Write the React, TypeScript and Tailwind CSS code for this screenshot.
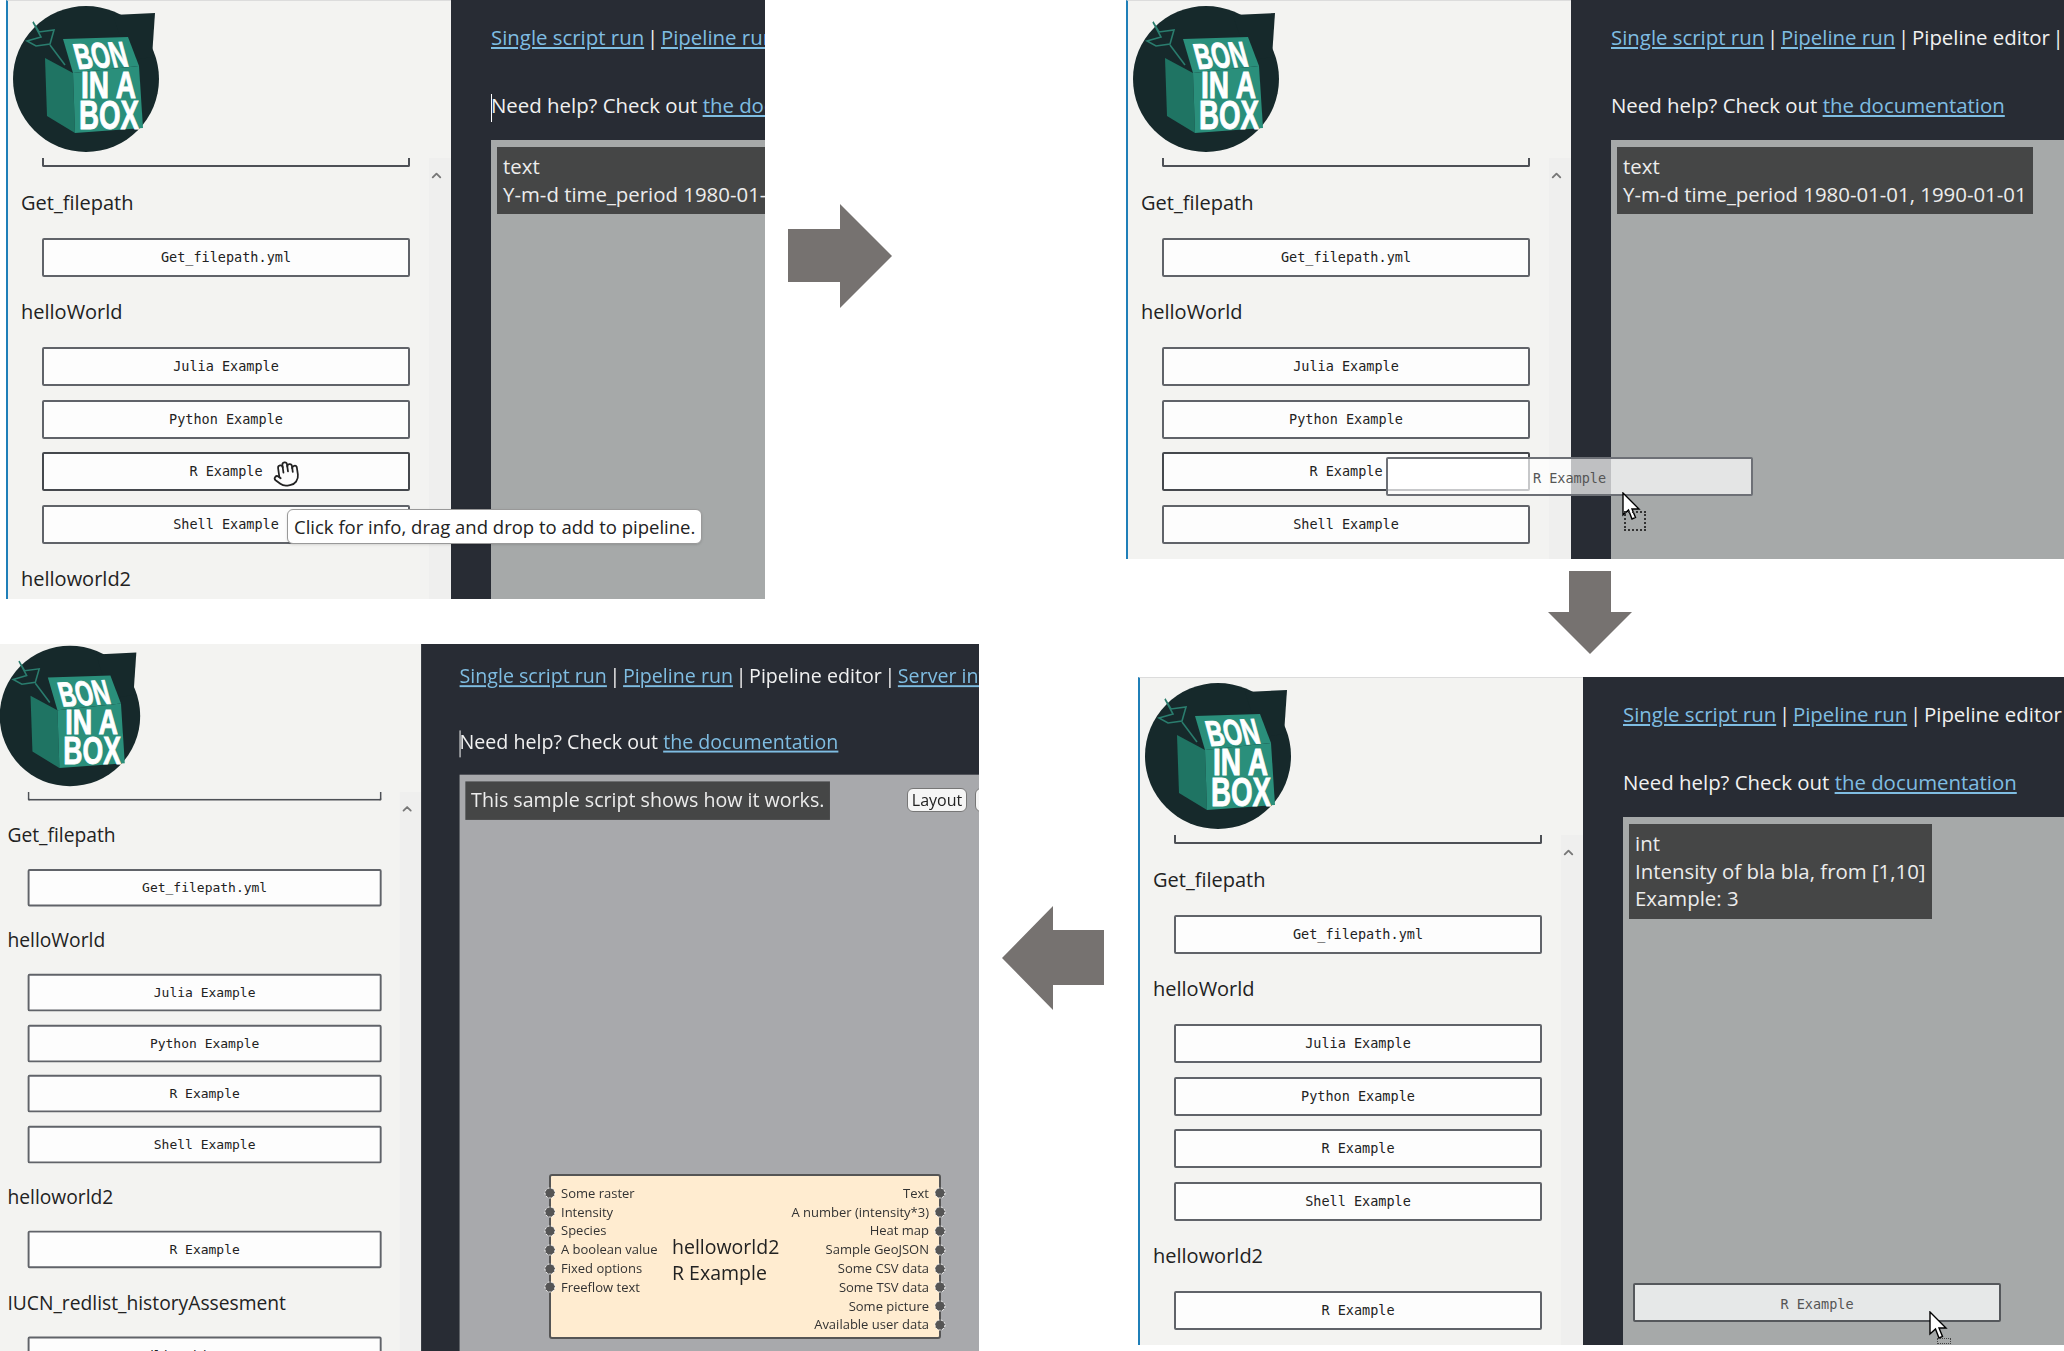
import React from 'react';
import { ChevronUp, Hand } from 'lucide-react';

type Section = { title: string; items: string[] };

const sections: Section[] = [
  { title: 'Get_filepath', items: ['Get_filepath.yml'] },
  { title: 'helloWorld', items: ['Julia Example', 'Python Example', 'R Example', 'Shell Example'] },
  { title: 'helloworld2', items: ['R Example'] },
  { title: 'IUCN_redlist_historyAssesment', items: ['IUCN_redlist_historyAssesment'] },
];

// Logo: the letters stay real text, squeezed with textLength
const Logo: React.FC = () => (
  <svg viewBox="0 0 160 160" className="w-40 h-40 shrink-0">
    <circle cx="78" cy="78" r="73" fill="#16292b" />
    <path d="M105 14 L147 12 L144 56 L120 60 Z" fill="#16292b" />
    <path d="M25 21 L31 31 L46 29 L42 43 L28 45 L19 40 L33 36 Z" fill="none" stroke="#2a7d6e" strokeWidth="1.6" />
    <path d="M42 44 L57 64" stroke="#2a7d6e" strokeWidth="1.6" />
    <path d="M37 57 L65 72 L67 132 L39 115 Z" fill="#1f7463" />
    <path d="M55 38 L120 36 L131 65 L65 72 Z" fill="#2a8f7b" />
    <path d="M65 72 L131 65 L135 127 L67 132 Z" fill="#2a8f7b" />
    <g fontFamily="'Liberation Sans', sans-serif" fontWeight="700" fill="#ffffff" stroke="#ffffff" strokeWidth="0.9">
      <text x="0" y="0" fontSize="36" textLength="52" lengthAdjust="spacingAndGlyphs" transform="translate(70 68) rotate(-3) skewX(12)">BON</text>
      <text x="73" y="97" fontSize="36" textLength="55" lengthAdjust="spacingAndGlyphs">IN A</text>
      <text x="71" y="128" fontSize="40" textLength="60" lengthAdjust="spacingAndGlyphs">BOX</text>
    </g>
  </svg>
);

const ScriptButton: React.FC<{ label: string; active?: boolean }> = ({ label, active }) => (
  <div
    className={`h-[39px] w-[368px] flex items-center justify-center bg-[#fdfdfd] border-2 rounded-[2px] font-['DejaVu_Sans_Mono',monospace] text-[13.5px] text-[#222] whitespace-nowrap ${
      active ? 'border-[#45484d]' : 'border-[#606369]'
    }`}
  >
    {label}
  </div>
);

const Sidebar: React.FC<{ activeR?: boolean }> = ({ activeR }) => (
  <aside className="w-[445px] shrink-0 flex flex-col bg-[#f3f3f1] border-l-2 border-[#1f7fb8] border-t border-t-[#dcdcdc]">
    <div className="h-[157px] shrink-0">
      <Logo />
    </div>
    <div className="flex flex-1 min-h-0">
      <div className="flex-1 overflow-hidden pl-[13px] flex flex-col gap-[21.5px] text-[#222] text-[20px]">
        <div className="ml-[21px] w-[368px] h-[9px] shrink-0 border-2 border-t-0 border-[#4d5056] rounded-b-[2px]" />
        {sections.map(section => (
          <div key={section.title} className="shrink-0">
            <div className="h-7 leading-7 mb-[21px] whitespace-nowrap">{section.title}</div>
            <div className="ml-[21px] flex flex-col gap-[13.5px]">
              {section.items.map((item, i) => (
                <ScriptButton
                  key={item}
                  label={item}
                  active={activeR && section.title === 'helloWorld' && i === 2}
                />
              ))}
            </div>
          </div>
        ))}
      </div>
      <div className="w-[22px] shrink-0 bg-[#efefee] flex justify-center pt-[8px] pr-[7px]">
        <ChevronUp size={19} strokeWidth={3} className="text-[#777]" />
      </div>
    </div>
  </aside>
);

const Sep: React.FC = () => <span className="-mx-[2.5px]"> | </span>;

const Panel: React.FC<{
  className: string;
  contentClass?: string;
  canvasClass?: string;
  caret?: boolean;
  activeR?: boolean;
  canvas: React.ReactNode;
  children?: React.ReactNode;
}> = ({ className, contentClass = 'h-full', canvasClass = 'bg-[#a6a9a9]', caret, activeR, canvas, children }) => (
  <div className={`absolute overflow-hidden ${className}`}>
    <div className={`flex ${contentClass}`}>
      <Sidebar activeR={activeR} />
      <main className="flex-1 min-w-0 bg-[#282c34] pl-10 flex flex-col text-[20.4px] text-[#f1f1f1]">
        <nav className="mt-[25px] h-6 leading-6 whitespace-nowrap">
          <a className="text-[#7fbde2] underline">Single script run</a>
          <Sep />
          <a className="text-[#7fbde2] underline">Pipeline run</a>
          <Sep />
          Pipeline editor
          <Sep />
          <a className="text-[#7fbde2] underline">Server info</a>
        </nav>
        <p className="mt-11 h-6 leading-6 whitespace-nowrap">
          {caret && <span className="inline-block w-px h-7 bg-white align-middle -mr-px" />}
          Need help? Check out <a className="text-[#7fbde2] underline">the documentation</a>
        </p>
        <div className={`mt-[23px] flex-1 relative ${canvasClass}`}>{canvas}</div>
      </main>
    </div>
    {children}
  </div>
);

const InfoBox: React.FC<{ lines: string[] }> = ({ lines }) => (
  <div className="absolute left-[6px] top-[7px] w-fit bg-[#454646] px-[6px] py-[6px] leading-[27.5px] text-[#ececec] whitespace-nowrap">
    {lines.map(line => (
      <div key={line}>{line}</div>
    ))}
  </div>
);

const Cursor: React.FC<{ className: string }> = ({ className }) => (
  <svg viewBox="0 0 20 30" className={`absolute w-5 h-[30px] ${className}`}>
    <path d="M1 1 L1 23 L6.5 18 L10 27 L13.5 25.5 L10 17 L17 17 Z" fill="#ffffff" stroke="#000000" strokeWidth="1.4" />
  </svg>
);

const ports = {
  left: ['Some raster', 'Intensity', 'Species', 'A boolean value', 'Fixed options', 'Freeflow text'],
  right: ['Text', 'A number (intensity*3)', 'Heat map', 'Sample GeoJSON', 'Some CSV data', 'Some TSV data', 'Some picture', 'Available user data'],
};

const Port: React.FC<{ label: string; side: 'left' | 'right' }> = ({ label, side }) => (
  <div className={`h-[18.8px] flex items-center gap-[5px] ${side === 'right' ? 'flex-row-reverse -mr-[7px]' : '-ml-[7px]'}`}>
    <svg viewBox="0 0 12 12" className="w-3 h-3 shrink-0">
      <circle cx="6" cy="6" r="5" fill="#555555" stroke="#ffffff" strokeDasharray="2 1.4" />
    </svg>
    <span className="text-[13px] leading-none whitespace-nowrap text-[#333]">{label}</span>
  </div>
);

const PipelineNode: React.FC = () => (
  <div className="absolute left-[549px] top-[530px] w-[392px] h-[165px] bg-[#ffecd0] border-2 border-[#555] rounded-[3px] flex justify-between pt-[8px] font-['Open_Sans',sans-serif]">
    <div className="flex flex-col">
      {ports.left.map(p => (
        <Port key={p} label={p} side="left" />
      ))}
    </div>
    <div className="absolute left-[121px] top-[58px] text-[19.5px] leading-[26px] text-[#222]">
      <div>helloworld2</div>
      <div>R Example</div>
    </div>
    <div className="flex flex-col">
      {ports.right.map(p => (
        <Port key={p} label={p} side="right" />
      ))}
    </div>
  </div>
);

// Block arrows between the screenshots
const BlockArrow: React.FC<{ className: string; viewBox: string; points: string }> = ({ className, viewBox, points }) => (
  <svg viewBox={viewBox} className={`absolute ${className}`}>
    <polygon points={points} fill="#767270" />
  </svg>
);

export default function App() {
  return (
    <div className="relative w-[2064px] h-[1351px] overflow-hidden bg-white font-['Open_Sans',sans-serif]">
      {/* Step 1: hovering a script */}
      <Panel
        className="left-[6px] top-0 w-[759px] h-[599px]"
        caret
        activeR
        canvas={<InfoBox lines={['text', 'Y-m-d time_period 1980-01-01, 1990-01-01']} />}
      >
        <Hand size={28} strokeWidth={1.5} className="absolute left-[266px] top-[460px] text-[#222] rotate-[-8deg]" />
        <div className="absolute left-[281px] top-[509px] h-[35px] px-[6px] flex items-center bg-white border border-[#999] rounded-md text-[18.5px] text-[#222] whitespace-nowrap shadow-sm">
          Click for info, drag and drop to add to pipeline.
        </div>
      </Panel>

      <BlockArrow className="left-[788px] top-[204px] w-[104px] h-[104px]" viewBox="0 0 104 104" points="0,25 52,25 52,0 104,52 52,104 52,78 0,78" />

      {/* Step 2: dragging */}
      <Panel
        className="left-[1126px] top-0 w-[938px] h-[559px]"
        activeR
        canvas={<InfoBox lines={['text', 'Y-m-d time_period 1980-01-01, 1990-01-01']} />}
      >
        <div className="absolute left-[260px] top-[457px] w-[367px] h-[39px] flex items-center justify-center pt-[3px] bg-white/70 border-2 border-[#6d7076] rounded-[2px] font-['DejaVu_Sans_Mono',monospace] text-[13.5px] text-[#555]">
          R Example
        </div>
        <Cursor className="left-[496px] top-[492px]" />
        <div className="absolute left-[498px] top-[511px] w-[22px] h-[20px] border-2 border-dotted border-[#333]" />
      </Panel>

      <BlockArrow className="left-[1548px] top-[571px] w-[84px] h-[83px]" viewBox="0 0 84 83" points="21,0 63,0 63,41 84,41 42,83 0,41 21,41" />

      {/* Step 3: dropped on the canvas */}
      <Panel
        className="left-[1138px] top-[677px] w-[926px] h-[668px]"
        canvas={<InfoBox lines={['int', 'Intensity of bla bla, from [1,10]', 'Example: 3']} />}
      >
        <div className="absolute left-[495px] top-[606px] w-[368px] h-[39px] flex items-center justify-center pt-[3px] bg-[#e6e8e8] border-2 border-[#55585c] rounded-[2px] font-['DejaVu_Sans_Mono',monospace] text-[13.5px] text-[#555]">
          R Example
        </div>
        <Cursor className="left-[791px] top-[634px]" />
        <div className="absolute left-[799px] top-[661px] w-[14px] h-[6px] border border-dotted border-[#444]" />
      </Panel>

      <BlockArrow className="left-[1002px] top-[906px] w-[102px] h-[104px]" viewBox="0 0 102 104" points="102,24 51,24 51,0 0,52 51,104 51,79 102,79" />

      {/* Step 4: the resulting node */}
      <Panel
        className="left-0 top-[644px] w-[979px] h-[707px]"
        contentClass="w-[1025px] h-[745px] -ml-[7px] -mt-[4px] scale-[0.962] origin-top-left"
        canvasClass="bg-[#a8a9ac]"
        caret
        canvas={<InfoBox lines={['This sample script shows how it works.']} />}
      >
        <div className="absolute left-[907px] top-[144px] w-[60px] h-6 flex items-center justify-center bg-[#f5f5f5] border border-[#777] rounded-md text-[16px] text-[#222]">
          Layout
        </div>
        <div className="absolute left-[975px] top-[144px] w-[60px] h-6 bg-[#f5f5f5] border border-[#777] rounded-md" />
        <PipelineNode />
      </Panel>
    </div>
  );
}
